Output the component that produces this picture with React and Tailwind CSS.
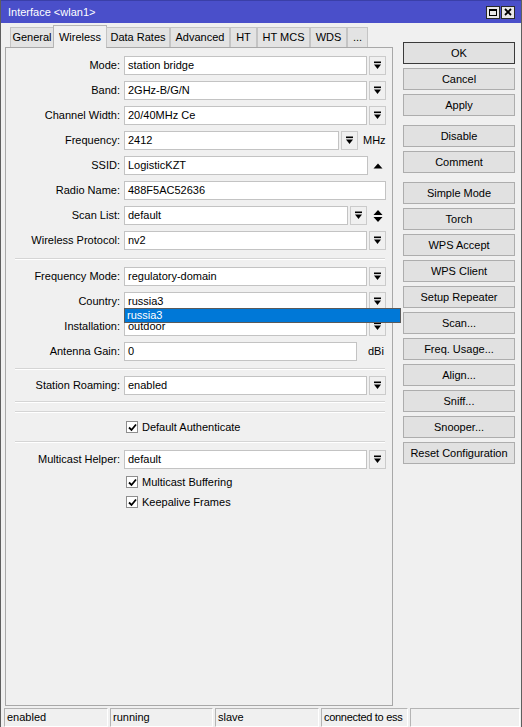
import React from 'react';

const FONT = { fontFamily: '"Liberation Sans", Arial, sans-serif' };

const TABS = [
  { id: 'general', label: 'General', w: 'w-[44px]' },
  { id: 'wireless', label: 'Wireless', w: 'w-[54px]', active: true },
  { id: 'rates', label: 'Data Rates', w: 'w-[64px]' },
  { id: 'advanced', label: 'Advanced', w: 'w-[60px]' },
  { id: 'ht', label: 'HT', w: 'w-[27px]' },
  { id: 'htmcs', label: 'HT MCS', w: 'w-[53px]' },
  { id: 'wds', label: 'WDS', w: 'w-[37px]' },
  { id: 'more', label: '...', w: 'w-[21px]' },
];

const STATUS = [
  { label: 'enabled', w: 'w-[104px]' },
  { label: 'running', w: 'w-[103px]' },
  { label: 'slave', w: 'w-[104px]' },
  { label: 'connected to ess', w: 'w-[87px] tracking-[-0.3px]' },
  { label: '', w: 'flex-1' },
];

// ─── Small glyphs ───────────────────────────────────────────────────────────

const DropIcon = () => (
  <svg width="9" height="9" viewBox="0 0 9 9">
    <rect x="1" y="0.5" width="7" height="1.6" fill="#000" />
    <polygon points="1,3.5 8,3.5 4.5,8" fill="#000" />
  </svg>
);

const UpIcon = () => (
  <svg width="10" height="6" viewBox="0 0 10 6">
    <polygon points="0.5,5.5 9.5,5.5 5,0.5" fill="#000" />
  </svg>
);

const UpDownIcon = () => (
  <svg width="10" height="14" viewBox="0 0 10 14">
    <polygon points="0.5,6 9.5,6 5,1" fill="#000" />
    <polygon points="0.5,8 9.5,8 5,13" fill="#000" />
  </svg>
);

const CheckIcon = () => (
  <svg width="9" height="9" viewBox="0 0 9 9">
    <path d="M1 4.5 L3.5 7 L8 1.5" stroke="#000" strokeWidth="1.8" fill="none" />
  </svg>
);

// ─── Form bits ──────────────────────────────────────────────────────────────

const Field = ({ value, w = 'w-[243px]', children }) => (
  <div className={`relative ${w} h-[19px] bg-white border border-[#c3c3c3] flex items-center px-[3px] text-black`}>
    {value}
    {children}
  </div>
);

const DropBtn = () => (
  <div className="w-[17px] h-[19px] ml-[2px] border border-[#cbcbcb] bg-[#f0f0f0] flex items-center justify-center">
    <DropIcon />
  </div>
);

const Row = ({ label, children }) => (
  <div className="flex items-center h-[25px]">
    <div className="w-[113px] text-right whitespace-nowrap">{label}</div>
    <div className="ml-[4px] flex items-center">{children}</div>
  </div>
);

const Select = ({ label, value }) => (
  <Row label={label}>
    <Field value={value} />
    <DropBtn />
  </Row>
);

const Sep = ({ className = '' }) => (
  <div className={`ml-[8px] w-[370px] border-t border-[#d5d5d5] border-b border-b-white ${className}`} />
);

const Check = ({ label }) => (
  <div className="flex items-center h-[20px] ml-[119px]">
    <div className="w-[12px] h-[12px] bg-white border border-[#8e8e8e] flex items-center justify-center">
      <CheckIcon />
    </div>
    <span className="ml-[4px]">{label}</span>
  </div>
);

const Btn = ({ label, primary, className = '' }) => (
  <div
    className={`h-[22px] w-[112px] flex items-center justify-center bg-[#e1e1e1] border ${primary ? 'border-[#3a3a3a]' : 'border-[#adadad]'} ${className}`}
  >
    {label}
  </div>
);

export default function App() {
  return (
    <div className="w-[522px] h-[727px] bg-[#f0f0f0] border-x border-[#5e5e5e] flex flex-col text-[11px] text-black overflow-hidden" style={FONT}>
      {/* Title bar */}
      <div className="h-[23px] bg-[#4a4fca] border-t border-[#3a3fa8] flex items-center pl-[7px] pr-[6px]">
        <span className="text-white text-[11px]">Interface &lt;wlan1&gt;</span>
        <div className="ml-auto flex gap-[1px]">
          <div className="w-[14px] h-[13px] bg-[#e8e8e8] border border-[#2a2a2a] flex items-center justify-center">
            <div className="w-[8px] h-[7px] border border-black border-t-2" />
          </div>
          <div className="w-[14px] h-[13px] bg-[#e8e8e8] border border-[#2a2a2a] flex items-center justify-center">
            <svg width="8" height="8" viewBox="0 0 8 8">
              <path d="M1 1 L7 7 M7 1 L1 7" stroke="#000" strokeWidth="1.8" />
            </svg>
          </div>
        </div>
      </div>

      {/* Body */}
      <div className="flex flex-1">
        {/* Left: tabs + panel */}
        <div className="w-[392px] pl-[4px] flex flex-col">
          <div className="h-[24px] flex items-end pl-[5px] relative z-10">
            {TABS.map(t => (
              <div
                key={t.id}
                className={
                  t.active
                    ? `${t.w} h-[23px] -mx-[1px] -mb-px bg-[#f0f0f0] border border-b-0 border-[#b5b5b5] flex items-start justify-center pt-[3px]`
                    : `${t.w} h-[20px] bg-[#e3e3e3] border border-b-0 border-[#c4c4c4] flex items-center justify-center`
                }
              >
                {t.label}
              </div>
            ))}
          </div>

          <div className="flex-1 border border-[#a8a8a8] pt-[5px] pl-px">
            <Select label="Mode:" value="station bridge" />
            <Select label="Band:" value="2GHz-B/G/N" />
            <Select label="Channel Width:" value="20/40MHz Ce" />
            <Row label="Frequency:">
              <Field value="2412" w="w-[215px]" />
              <DropBtn />
              <span className="ml-[5px]">MHz</span>
            </Row>
            <Row label="SSID:">
              <Field value="LogisticKZT" w="w-[244px]" />
              <span className="ml-[5px] flex"><UpIcon /></span>
            </Row>
            <Row label="Radio Name:">
              <Field value="488F5AC52636" w="w-[262px]" />
            </Row>
            <Row label="Scan List:">
              <Field value="default" w="w-[224px]" />
              <DropBtn />
              <span className="ml-[6px] flex"><UpDownIcon /></span>
            </Row>
            <Select label="Wireless Protocol:" value="nv2" />

            <Sep className="mt-[5px] mb-[4px]" />

            <Select label="Frequency Mode:" value="regulatory-domain" />
            <Row label="Country:">
              <Field value="russia3">
                {/* open dropdown list */}
                <div className="absolute left-[-1px] top-[15px] w-[277px] h-[15px] bg-[#0078d7] border border-[#5a5a5a] text-white flex items-center pl-[2px] z-20">
                  russia3
                </div>
              </Field>
              <DropBtn />
            </Row>
            <Select label="Installation:" value="outdoor" />
            <Row label="Antenna Gain:">
              <Field value="0" w="w-[233px]" />
              <span className="ml-[11px]">dBi</span>
            </Row>

            <Sep className="mt-[4px] mb-[3px]" />

            <Select label="Station Roaming:" value="enabled" />

            <Sep className="mt-[3px]" />
            <Sep className="mt-[8px]" />

            <div className="mt-[4px]">
              <Check label="Default Authenticate" />
            </div>

            <Sep className="mt-[4px] mb-[4px]" />

            <Select label="Multicast Helper:" value="default" />
            <Check label="Multicast Buffering" />
            <Check label="Keepalive Frames" />
          </div>
        </div>

        {/* Right: buttons */}
        <div className="ml-[10px] pt-[19px] flex flex-col gap-[4px]">
          <Btn label="OK" primary />
          <Btn label="Cancel" />
          <Btn label="Apply" />
          <Btn label="Disable" className="mt-[5px]" />
          <Btn label="Comment" />
          <Btn label="Simple Mode" className="mt-[5px]" />
          <Btn label="Torch" />
          <Btn label="WPS Accept" />
          <Btn label="WPS Client" />
          <Btn label="Setup Repeater" />
          <Btn label="Scan..." />
          <Btn label="Freq. Usage..." />
          <Btn label="Align..." />
          <Btn label="Sniff..." />
          <Btn label="Snooper..." />
          <Btn label="Reset Configuration" />
        </div>
      </div>

      {/* Status bar */}
      <div className="h-[21px] pt-[2px] pl-[3px] pr-px flex gap-[2px]">
        {STATUS.map((s, i) => (
          <div key={i} className={`${s.w} h-[19px] shrink-0 border border-[#b4b4b4] border-b-white border-r-white flex items-center pl-[2px] whitespace-nowrap overflow-hidden`}>
            {s.label}
          </div>
        ))}
      </div>
    </div>
  );
}
